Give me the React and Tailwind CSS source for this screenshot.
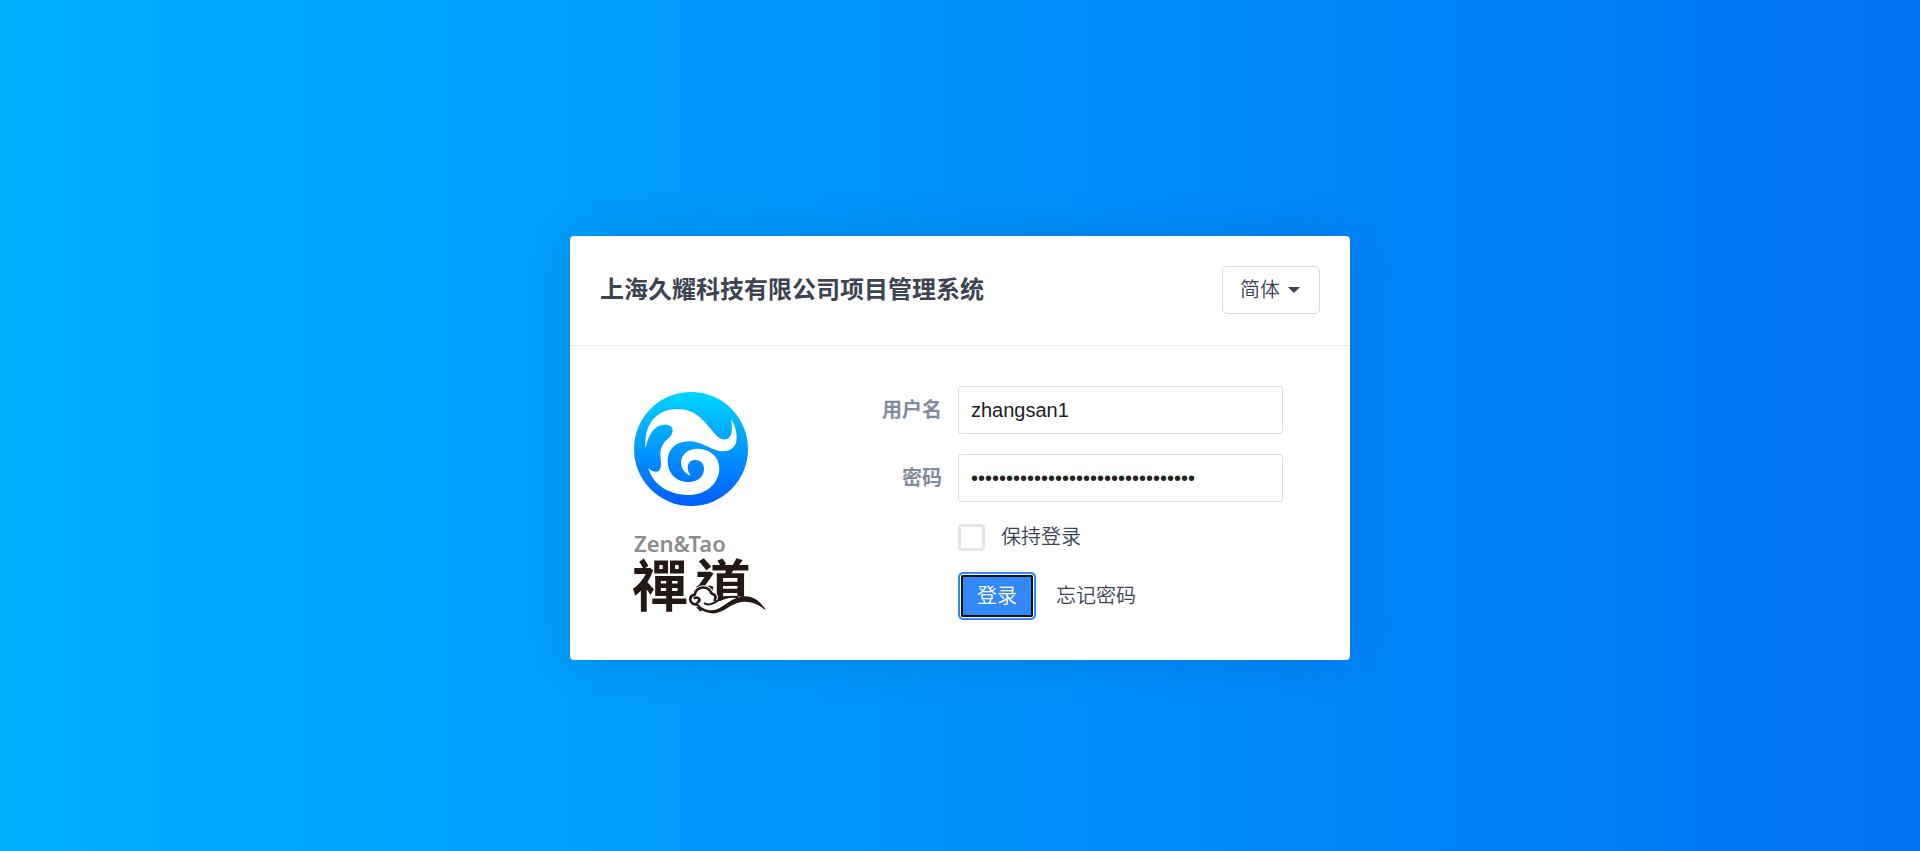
import React, { useState } from "react";

function Logo() {
  return (
    <svg viewBox="0 0 136 224" className="mt-1.5 h-[224px] w-[136px] shrink-0 overflow-visible" role="img" aria-label="Zen&Tao 禪道">
      <defs>
        <linearGradient id="disc" x1="0" y1="0" x2="0" y2="1">
          <stop offset="0" stopColor="#00d6ff" />
          <stop offset="0.5" stopColor="#0098ff" />
          <stop offset="1" stopColor="#005cff" />
        </linearGradient>
      </defs>
      <circle cx="57" cy="57" r="57" fill="url(#disc)" />
      <g transform="scale(0.33333) translate(-42 -36)">
        <path
          fill="#fff"
          d="M77 205 C70 140 105 87 172 87 C225 87 250 120 275 150 C290 168 302 181 318 178 C337 174 337 150 334 118 C345 135 353 162 349 185 C343 210 318 217 295 212 C265 205 240 184 208 184 C165 184 143 210 143 243 C143 285 175 307 208 306 C236 304 252 288 252 266 C252 248 238 238 222 240 C203 242 196 264 212 287 C193 280 182 262 183 245 C186 220 207 205 235 206 C275 208 300 235 298 270 C293 315 255 345 205 345 C140 343 97 310 85 263 C92 272 105 278 115 274 C125 268 123 250 122 235 C118 205 128 190 145 175 C158 165 162 150 153 139 C140 130 115 133 100 150 C88 165 80 185 77 205 Z"
        />
      </g>
      <text x="0" y="160" fontSize="22" fill="#8c8c8c" className="font-['Noto_Sans',sans-serif] font-semibold">Zen&amp;Tao</text>
      <text y="214" fontSize="56" fill="#231815" className="font-['Noto_Sans_CJK_TC',sans-serif] font-bold">
        <tspan x="-2">禪</tspan>
        <tspan x="61">道</tspan>
      </text>
      <g transform="scale(0.33333) translate(-42 384)" fill="none" strokeLinecap="round" strokeLinejoin="round">
        <path
          fill="#fff"
          stroke="#fff"
          strokeWidth="12"
          d="M232 256 C208 252 204 226 226 222 C232 196 266 196 274 218 C290 222 292 236 282 242 L300 250 C330 236 360 230 392 242 L437 271 C437 300 390 300 294 278 C266 282 248 268 238 256 Z"
        />
        <path
          stroke="#231815"
          strokeWidth="8"
          d="M230 254 C206 252 205 228 224 224 C230 196 266 196 274 220 C286 222 290 232 284 240 M224 234 C236 230 244 240 234 246"
        />
        <path
          fill="#231815"
          d="M230 246 C240 262 258 272 276 271 C306 270 320 240 362 230 C396 224 420 242 438 271 C414 252 390 242 364 246 C330 252 314 276 284 280 C254 282 232 264 226 250 Z"
        />
        <path stroke="#231815" strokeWidth="6" d="M254 250 C270 260 284 246 304 236 C322 228 340 230 352 231" />
      </g>
    </svg>
  );
}

const inputClass =
  "h-12 w-full rounded-[3px] border border-[#dcdcdc] bg-white px-3 text-xl text-[#222] outline-none";
const labelClass = "self-center text-right font-bold text-[#838a9d]";

export default function App() {
  const [user, setUser] = useState("zhangsan1");
  const [password, setPassword] = useState("0123456789abcdef0123456789abcdef");

  return (
    <main className="flex min-h-screen items-start justify-center bg-linear-to-r from-[#00b0ff] to-[#0072f5] pt-[236px] pb-8 font-['Liberation_Sans','Noto_Sans_CJK_SC',sans-serif] text-xl text-[#3c4353]">
      <section className="w-full max-w-[780px] rounded bg-white shadow-[0_0_50px_rgba(0,0,0,0.12)]">
        <header className="flex items-start justify-between border-b border-[#eee] px-[30px] pt-[30px] pb-[31px]">
          <h1 className="text-2xl leading-[48px] font-bold">上海久耀科技有限公司项目管理系统</h1>
          <div className="relative">
            <select
              aria-label="语言"
              className="h-12 w-[98px] appearance-none rounded-[5px] border border-[#d8dbe5] bg-white pl-[17px] font-[350]"
            >
              <option>简体</option>
              <option>繁體</option>
            </select>
            <svg viewBox="0 0 12 6" className="pointer-events-none absolute top-[21px] right-5 h-1.5 w-3" fill="#3c4353" aria-hidden="true">
              <path d="M0 0h12L6 6z" />
            </svg>
          </div>
        </header>
        <div className="flex justify-between py-10 pr-[67px] pl-16">
          <Logo />
          <form className="grid grid-cols-[auto_325px] gap-x-4 gap-y-5" onSubmit={(e) => e.preventDefault()}>
            <label htmlFor="account" className={labelClass}>用户名</label>
            <input id="account" type="text" className={inputClass} value={user} onChange={(e) => setUser(e.target.value)} />
            <label htmlFor="password" className={labelClass}>密码</label>
            <input id="password" type="password" className={inputClass} value={password} onChange={(e) => setPassword(e.target.value)} />
            <div className="col-start-2 flex h-[30px] items-center gap-4">
              <input
                id="keep"
                type="checkbox"
                className="size-[27px] appearance-none rounded border-3 border-[#e5e5e5] bg-white checked:bg-[#3388f8]"
              />
              <label htmlFor="keep" className="font-[350]">保持登录</label>
            </div>
            <div className="col-start-2 flex items-center gap-5">
              <button
                type="submit"
                className="h-12 rounded-[5px] border-2 border-[#3388f8] bg-[#3388f8] px-[17px] font-[350] text-white shadow-[inset_0_0_0_1px_#fff] outline-2 -outline-offset-5 outline-[#101010]"
              >
                登录
              </button>
              <a href="#forgot" className="font-[350]">忘记密码</a>
            </div>
          </form>
        </div>
      </section>
    </main>
  );
}
